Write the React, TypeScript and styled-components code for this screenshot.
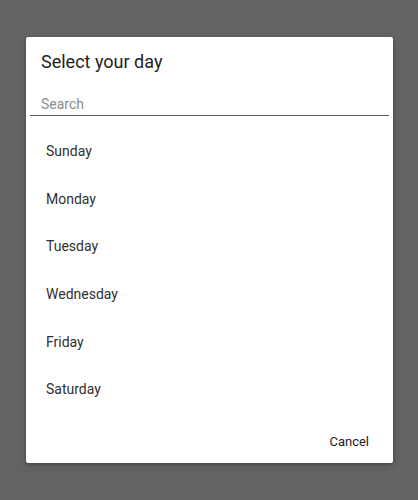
import React, { useState } from 'react'
import styled, { createGlobalStyle } from 'styled-components'

const DAYS = ['Sunday', 'Monday', 'Tuesday', 'Wednesday', 'Friday', 'Saturday']

const GlobalStyle = createGlobalStyle`
  html, body {
    margin: 0;
    padding: 0;
    background: #646464;
  }
  body {
    font-family: Roboto, 'Liberation Sans', Arial, sans-serif;
    -webkit-font-smoothing: antialiased;
  }
`

export default function App() {
  const [query, setQuery] = useState('')
  const days = DAYS.filter((day) => day.toLowerCase().includes(query.toLowerCase()))

  return (
    <>
      <GlobalStyle />
      <Backdrop>
        <Dialog role="dialog" aria-labelledby="day-title">
          <Title id="day-title">Select your day</Title>
          <SearchField>
            <SearchInput
              placeholder="Search"
              value={query}
              onChange={(e) => setQuery(e.target.value)}
            />
          </SearchField>
          <DayList>
            {days.map((day) => (
              <DayItem key={day}>{day}</DayItem>
            ))}
          </DayList>
          <Actions>
            <TextButton>Cancel</TextButton>
          </Actions>
        </Dialog>
      </Backdrop>
    </>
  )
}

const Backdrop = styled.div`
  width: 418px;
  height: 500px;
  padding: 37px 25px 0 26px;
  box-sizing: border-box;
  background: #646464;
`

const Dialog = styled.div`
  width: 367px;
  height: 426px;
  box-sizing: border-box;
  background: #fff;
  border-radius: 2px;
  box-shadow: 0 3px 8px rgba(0, 0, 0, 0.18), 0 1px 3px rgba(0, 0, 0, 0.2);
  display: flex;
  flex-direction: column;
  padding-top: 14px;
  overflow: hidden;
`

const Title = styled.h2`
  margin: 0;
  padding: 0 15px;
  font-size: 18px;
  line-height: 22px;
  font-weight: 400;
  color: #222;
`

const SearchField = styled.div`
  margin: 20px 4px 0;
`

const SearchInput = styled.input`
  display: block;
  width: 100%;
  box-sizing: border-box;
  height: 22.5px;
  padding: 1px 11px 0;
  border: none;
  border-bottom: 1.5px solid #5a5a5a;
  outline: none;
  background: transparent;
  font-family: inherit;
  font-size: 14px;
  line-height: 20px;
  color: #222;

  &::placeholder {
    color: #8c8c8c;
  }
`

const DayList = styled.ul`
  list-style: none;
  margin: 12.6px 0 0;
  padding: 0;
  flex: 1;
`

const DayItem = styled.li`
  height: 47.66px;
  line-height: 47.66px;
  padding: 0 20px;
  font-size: 14px;
  color: #303030;
`

const Actions = styled.div`
  display: flex;
  justify-content: flex-end;
  padding: 0 16px 4px;
`

const TextButton = styled.button`
  height: 36px;
  padding: 0 8px;
  border: none;
  background: transparent;
  font-family: inherit;
  font-size: 13px;
  font-weight: 400;
  color: #1a1a1a;
  cursor: pointer;
`
